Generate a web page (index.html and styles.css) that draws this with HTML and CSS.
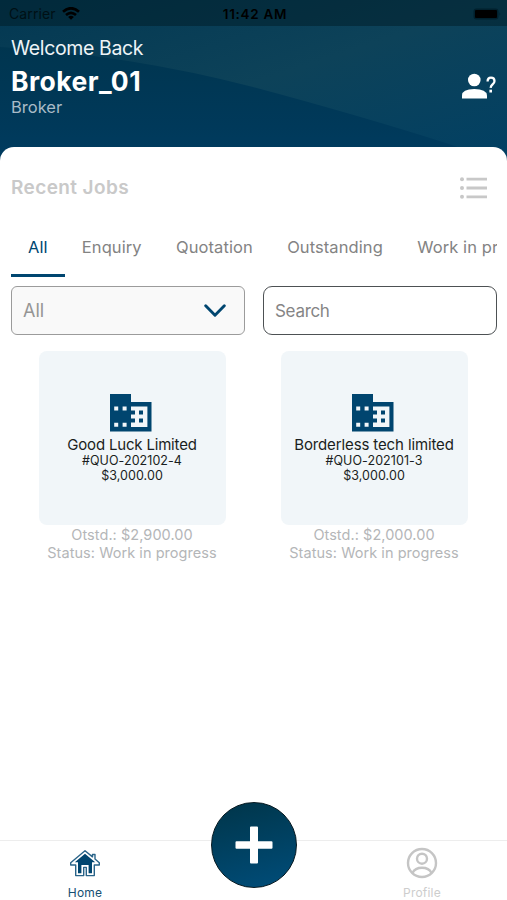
FILE: index.html
```html
<!DOCTYPE html>
<html lang="en">
<head>
<meta charset="utf-8">
<title>Recent Jobs</title>
<link rel="stylesheet" href="styles.css">
</head>
<body>
<div class="app">
  <header class="header">
    <svg class="header-curve" viewBox="0 0 507 170" preserveAspectRatio="none" aria-hidden="true">
      <defs><linearGradient id="sheen" x1="0" y1="0" x2="1" y2="1"><stop offset="0" stop-color="#033852"/><stop offset=".5" stop-color="#0d4259"/><stop offset="1" stop-color="#014064"/></linearGradient></defs>
      <path d="M0 47Q130 55 253 87Q365 117 452 145L507 166V0H0Z" fill="url(#sheen)"/>
    </svg>
    <div class="status">
      <div class="carrier"><span>Carrier</span>
        <svg width="18" height="13" viewBox="0 0 18 13" fill="none" stroke="#000" stroke-width="2.7"><path d="M1 4.7Q9-2.2 17 4.7M4 8Q9 3.7 14 8"/><path d="M9 12.8 6.1 10Q9 7.6 11.900 10Z" fill="#000" stroke="none"/></svg>
      </div>
      <span class="clock">11:42 AM</span>
      <svg class="battery" width="28" height="12" viewBox="0 0 28 12"><rect x=".5" y=".5" width="25" height="11" rx="3" fill="#00202d"/><rect x="2" y="2" width="22" height="8" rx="1"/><path d="M26.5 4v4q1.4-2 0-4" fill="#00202d"/></svg>
    </div>
    <div class="greeting">
      <div>
        <p class="welcome">Welcome Back</p>
        <h1>Broker_01</h1>
        <p class="role">Broker</p>
      </div>
      <svg class="user-help" width="36" height="27" viewBox="0 0 36 27" fill="#fff"><circle cx="13.3" cy="7" r="6.3"/><path d="M1 25.500v-3Q1 16 13.3 16T26 22.500v3Z"/><path d="M26.6 8.5Q26.6 4.7 30 4.7T33.5 8Q33.5 9.9 31.7 11.2T29.6 14.8" fill="none" stroke="#fff" stroke-width="2.3"/><rect x="28.4" y="16.7" width="2.6" height="2.8"/></svg>
    </div>
  </header>

  <main class="sheet">
    <div class="title-row">
      <h2>Recent Jobs</h2>
      <svg width="28" height="22" viewBox="0 0 28 22" fill="#c8c8c8"><circle cx="2" cy="2.2" r="2"/><circle cx="2" cy="11" r="2"/><circle cx="2" cy="19.8" r="2"/><path d="M6.5.8H27v2.8H6.5zM6.5 9.6H27v2.8H6.5zM6.5 18.4H27v2.8H6.5z"/></svg>
    </div>
    <nav class="tabs">
      <span class="tab active">All</span><span class="tab">Enquiry</span><span class="tab">Quotation</span><span class="tab">Outstanding</span><span class="tab">Work in progress</span>
    </nav>
    <div class="filters">
      <div class="select"><span>All</span>
        <svg width="22" height="14" viewBox="0 0 22 14" fill="none" stroke="#004670" stroke-width="2.9" stroke-linecap="round" stroke-linejoin="round"><path d="m1.7 1.8 9.3 9.4 9.3-9.4"/></svg>
      </div>
      <div class="search">Search</div>
    </div>
    <section class="jobs">
      <article class="job">
        <div class="card">
          <svg width="42" height="38" viewBox="0 0 42 38"><path fill="#00456f" fill-rule="evenodd" d="M0 0h21v8h20.5v29.5H0ZM4.2 12.4v4h4v-4ZM12.6 12.4v4h4v-4ZM4.2 28.8v4h4v-4ZM12.6 28.8v4h4v-4ZM21 12.4v4h4v4h-4v4.2h4v4h-4v4.5h16.4V12.4ZM29 16.4h4v4h-4ZM29 24.6h4v4h-4Z"/></svg>
          <h3 class="snug">Good Luck Limited</h3>
          <p class="ref">#QUO-202102-4</p>
          <p class="amount">$3,000.00</p>
        </div>
        <p class="meta">Otstd.: $2,900.00</p>
        <p class="meta">Status: Work in progress</p>
      </article>
      <article class="job">
        <div class="card">
          <svg width="42" height="38" viewBox="0 0 42 38"><path fill="#00456f" fill-rule="evenodd" d="M0 0h21v8h20.5v29.5H0ZM4.2 12.4v4h4v-4ZM12.6 12.4v4h4v-4ZM4.2 28.8v4h4v-4ZM12.6 28.8v4h4v-4ZM21 12.4v4h4v4h-4v4.2h4v4h-4v4.5h16.4V12.4ZM29 16.4h4v4h-4ZM29 24.6h4v4h-4Z"/></svg>
          <h3>Borderless tech limited</h3>
          <p class="ref">#QUO-202101-3</p>
          <p class="amount">$3,000.00</p>
        </div>
        <p class="meta">Otstd.: $2,000.00</p>
        <p class="meta">Status: Work in progress</p>
      </article>
    </section>
  </main>

  <footer class="tabbar">
    <div class="nav-item home">
      <svg width="32" height="30" viewBox="0 0 32 30"><path d="M16 1.8 1.7 13.8v2.2h5v10.6h8v-8.200h2.600v8.200h8V16h5v-2.200L26 10V5.500h-2.500v2.400Z" fill="#fff" stroke="#2a6489" stroke-width="1.4" stroke-linejoin="round"/><path d="M16 4.700 5.800 13.300H9v11h3.400V16h7.200v8.300H23v-11h3.200Z" fill="#00456f"/></svg>
      <span>Home</span>
    </div>
    <div class="nav-item profile">
      <svg width="32" height="32" viewBox="0 0 32 32" fill="none" stroke="#c5c5c5" stroke-width="2.4"><circle cx="16" cy="16" r="14"/><circle cx="16" cy="11.7" r="5"/><path d="M6.500 26Q9 20.700 16 20.700T25.500 26"/></svg>
      <span>Profile</span>
    </div>
    <div class="add"><svg width="38" height="38" viewBox="0 0 38 38" fill="#fff"><path d="M16 .5h6a1 1 0 0 1 1 1v13.7h13.5a1 1 0 0 1 1 1v5.6a1 1 0 0 1-1 1H23v13.7a1 1 0 0 1-1 1h-6a1 1 0 0 1-1-1V22.8H1.5a1 1 0 0 1-1-1v-5.6a1 1 0 0 1 1-1H15V1.5a1 1 0 0 1 1-1Z"/></svg></div>
  </footer>
</div>
</body>
</html>
```
FILE: styles.css
```css
* { box-sizing: border-box; }
body, h1, h2, h3, p { margin: 0; }
body { font-family: Inter, "Liberation Sans", sans-serif; background: #fff; }
svg { display: block; flex: none; }
.app { width: 507px; height: 900px; display: flex; flex-direction: column; overflow: hidden; }

.header { position: relative; height: 170px; flex: none; background: linear-gradient(#003349, #00395a 75%, #003d62); }
.header-curve { position: absolute; inset: 0; width: 100%; height: 100%; }
.status { position: relative; height: 26px; padding: 1px 6px 0 9px; background: rgba(0, 28, 38, .5); display: grid; grid-template-columns: 1fr auto 1fr; align-items: center; color: #000; font-size: 14px; }
.carrier { display: flex; align-items: center; gap: 6px; color: #001015; letter-spacing: .1px; }
.clock { font-weight: 600; font-size: 13.5px; letter-spacing: .7px; }
.battery { justify-self: end; }
.greeting { position: relative; display: flex; justify-content: space-between; padding: 10px 10px 0 11px; color: #fff; white-space: nowrap; }
.welcome { font-size: 19.5px; line-height: 24px; letter-spacing: -.38px; color: #eef4f7; }
h1 { font-size: 26.5px; line-height: 32px; font-weight: 700; letter-spacing: .45px; margin-top: 5px; }
.role { font-size: 16.5px; line-height: 20px; color: #a9bbc7; }
.user-help { margin-top: 37px; }

.sheet { position: relative; flex: 1; margin-top: -23px; padding: 0 10px 0 11px; background: #fff; border-radius: 14px 14px 0 0; }
.title-row { height: 81px; display: flex; align-items: center; justify-content: space-between; padding-right: 9px; }
h2 { font-size: 19px; line-height: 24px; padding-top: 1px; font-weight: 600; letter-spacing: .4px; color: #c9c9c9; }
.tabs { display: flex; height: 49px; overflow: hidden; white-space: nowrap; font-size: 16.5px; color: #838383; }
.tab { flex: none; height: 49px; padding: 9px 17.2px 0; line-height: 20px; letter-spacing: .08px; }
.active { color: #004670; border-bottom: 3px solid #004670; padding: 9px 17px 0; }
.filters { display: grid; grid-template-columns: 234px 234px; justify-content: space-between; margin-top: 9px; }
.select, .search { height: 49px; display: flex; align-items: center; justify-content: space-between; font-size: 17px; color: #858585; }
.select { border: 1.5px solid #9b9b9b; border-radius: 6px; padding: 0 18px 0 11px; background: #f9f9f9; font-size: 18px; color: #959595; }
.search { border: 1.5px solid #4d5154; border-radius: 9px; padding: 0 11px; letter-spacing: -.3px; }

.jobs { display: grid; grid-template-columns: 242px 242px; margin-top: 16px; }
.job { display: flex; flex-direction: column; align-items: center; text-align: center; white-space: nowrap; }
.card { width: 187px; height: 174px; padding-top: 43px; margin-bottom: 1px; border-radius: 8px; background: #f1f6f9; display: flex; flex-direction: column; align-items: center; color: #1a1e21; }
.card svg { margin-left: -2px; }
h3 { margin-top: 4px; font-size: 15px; line-height: 17px; font-weight: 400; letter-spacing: -.12px; }
.snug { letter-spacing: -.18px; }
.ref, .amount { font-size: 12.5px; line-height: 15px; letter-spacing: .06px; }
.meta { font-size: 14.5px; line-height: 18px; letter-spacing: .05px; color: #b4b6b8; }

.tabbar { position: relative; height: 60px; flex: none; border-top: 1px solid #ededed; display: grid; grid-template-columns: 170px 1fr 170px; background: #fff; font-size: 12px; }
.nav-item { display: flex; flex-direction: column; align-items: center; height: 59px; }
.nav-item span { margin-top: auto; line-height: 14px; letter-spacing: .2px; }
.home { padding: 8px 0 0; color: #174f72; grid-column: 1; }
.profile { padding: 6px 0 0; color: #cdcdcd; grid-column: 3; }
.add { position: absolute; left: 210.5px; top: -39px; width: 86px; height: 86px; border-radius: 50%; border: 1.5px solid #051820; background: linear-gradient(165deg, #003549, #004d7a); display: flex; align-items: center; justify-content: center; }
```
